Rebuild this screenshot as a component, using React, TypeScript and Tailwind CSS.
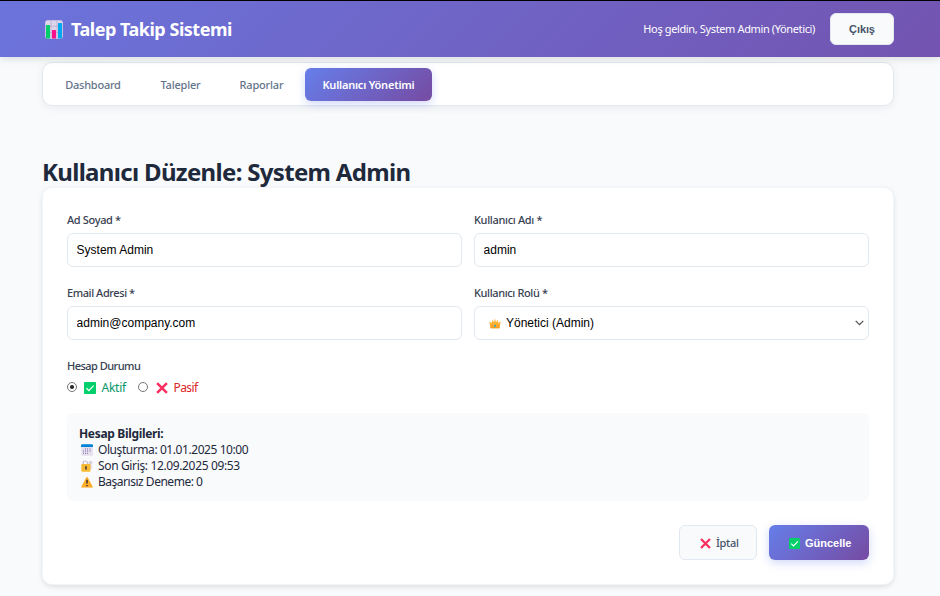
import React from 'react';

function ChartIcon() {
  return (
    <svg className="h-[19px] w-[18px] shrink-0" viewBox="0 0 18 19">
      <rect x="0.2" y="0.2" width="17.6" height="18.6" rx="2.4" fill="#dfd5ea" />
      <path d="M0.5 6.3H17.5M0.5 12.5H17.5M6.1 0.5V18M12 0.5V18" stroke="#b9a9d2" strokeWidth="0.8" />
      <rect x="1" y="5" width="4" height="13.6" rx="0.5" fill="#00cc6a" />
      <rect x="7" y="10" width="4" height="8.6" rx="0.5" fill="#f9108a" />
      <rect x="13" y="3" width="4" height="15.6" rx="0.5" fill="#00a8f0" />
    </svg>
  );
}

function CheckIcon({ className }: { className: string }) {
  return (
    <svg className={`shrink-0 ${className}`} viewBox="0 0 12 12">
      <rect width="12" height="12" rx="1" fill="#00cf6b" />
      <path d="M2.4 6.2 4.9 8.6 9.7 3.7" fill="none" stroke="#fff" strokeWidth="1.2" />
    </svg>
  );
}

function CrossIcon({ className }: { className: string }) {
  return (
    <svg className={`shrink-0 ${className}`} viewBox="0 0 12 12">
      <path d="M1.1 1.1 10.9 10.9M10.9 1.1 1.1 10.9" fill="none" stroke="#f92f60" strokeWidth="2.5" />
    </svg>
  );
}

function CrownIcon() {
  return (
    <svg className="h-[11px] w-[12px] shrink-0" viewBox="0 0 12 11">
      <path d="M0.4 3.2 2.8 5 3.7 1.6 5 4.4 6 0.6 7 4.4 8.3 1.6 9.2 5 11.6 3.2 10.6 10.2H1.4Z" fill="#ffb02e" />
      <path d="M1.5 8.9H10.5L10.3 10.3H1.7Z" fill="#f59a23" />
      <circle cx="6" cy="7.8" r="1.1" fill="#26a9b8" />
      <circle cx="3" cy="7.7" r="0.6" fill="#f3702d" />
      <circle cx="9" cy="7.7" r="0.6" fill="#f3702d" />
    </svg>
  );
}

function CalendarIcon() {
  return (
    <svg className="h-3 w-3 shrink-0" viewBox="0 0 12 12">
      <rect x="0.2" y="0.5" width="11.6" height="11.3" rx="1.2" fill="#e5dfee" />
      <path d="M0 3V1.4Q0 0.2 1.2 0.2H10.8Q12 0.2 12 1.4V3Z" fill="#0084d8" />
      <path
        d="M4 4.5h1v1h-1zM6 4.5h1v1h-1zM8.5 4.5h1v1h-1zM2 6.5h1v1h-1zM4 6.5h1v1h-1zM6 6.5h1v1h-1zM8.5 6.5h1v1h-1zM2 8.7h1v1h-1zM4 8.7h1v1h-1zM6 8.7h1v1h-1z"
        fill="#7d6ba8"
      />
    </svg>
  );
}

function LockIcon() {
  return (
    <svg className="h-3 w-3 shrink-0" viewBox="0 0 12 12">
      <path d="M2.2 5V3Q2.2 1 4.3 1T6.6 3V5" fill="none" stroke="#c7bdcd" strokeWidth="1.2" />
      <circle cx="9.5" cy="2.8" r="2" fill="#d9d2dc" />
      <path d="M9 4.5H10.6V9H9Z" fill="#d9d2dc" />
      <rect x="0.3" y="4" width="9.2" height="7.7" rx="1" fill="#f8b932" />
      <path d="M5 6.7V9" stroke="#493a42" strokeWidth="1.6" strokeLinecap="round" />
    </svg>
  );
}

function WarningIcon() {
  return (
    <svg className="h-3 w-3 shrink-0" viewBox="0 0 12 12">
      <path d="M6 1.1 11.4 11.1H0.6Z" fill="#ffad2b" stroke="#ffad2b" strokeWidth="1" strokeLinejoin="round" />
      <path d="M6 3.8V7.5M6 8.9V10.2" stroke="#2b2532" strokeWidth="1.4" />
    </svg>
  );
}

const arial = "font-['Liberation_Sans',Arial,sans-serif]";

function Field({ label, labelClass, children }: { label: string; labelClass: string; children: React.ReactNode }) {
  return (
    <label className="flex min-w-0 flex-1 flex-col gap-[5px]">
      <span className={`h-4 text-[11px] leading-4 font-medium whitespace-nowrap text-[#374151] ${labelClass}`}>{label}</span>
      {children}
    </label>
  );
}

function TextInput({ value }: { value: string }) {
  return (
    <input
      defaultValue={value}
      className={`h-[34px] w-full rounded-[6px] border border-[#e2e8f0] bg-white px-[8.6px] text-[12px] text-black ${arial}`}
    />
  );
}

export default function App() {
  return (
    <div className="h-[596px] overflow-hidden bg-[#f8fafc] font-['Noto_Sans','Open_Sans',sans-serif] text-[#1f2937]">
      <header className="relative h-[57px] border-t border-black bg-[linear-gradient(135deg,#6b74dc_0%,#7354b0_100%)] pr-[46px] pl-[45px] shadow-[0_2px_8px_rgba(0,0,0,0.12)]">
        <div className="flex h-full items-center">
          <ChartIcon />
          <h1 className="ml-[8px] text-[18px] leading-6 font-bold tracking-[-0.48px] whitespace-nowrap text-white">Talep Takip Sistemi</h1>
          <span className="ml-auto text-[11px] leading-4 tracking-[-0.37px] whitespace-nowrap text-white">Hoş geldin, System Admin (Yönetici)</span>
          <button className={`ml-[15px] h-8 w-16 rounded-[6px] border border-[#e2e8f0] bg-[#f8fafc] text-[11px] font-bold tracking-[-0.1px] text-[#475569] ${arial}`}>Çıkış</button>
        </div>
      </header>

      <div className="ml-[42px] w-[852px] pt-[5px]">
        <nav className="flex h-[44px] items-center gap-1 rounded-[10px] border border-[#e2e8f0] bg-white px-[5px] text-[11px] font-medium text-[#64748b] shadow-[0_2px_8px_rgba(0,0,0,0.06)]">
          <a className="w-[90px] pt-[2px] text-center tracking-[-0.25px]">Dashboard</a>
          <a className="ml-px w-[75px] pt-[2px] text-center tracking-[-0.2px]">Talepler</a>
          <a className="w-[79px] pt-[2px] text-center tracking-[-0.2px]">Raporlar</a>
          <a className="h-[33px] w-[127px] rounded-[6px] bg-[linear-gradient(135deg,#667eea_0%,#764ba2_100%)] text-center leading-[34px] font-semibold tracking-[-0.22px] text-white shadow-[0_3px_8px_rgba(102,126,234,0.3)]">
            Kullanıcı Yönetimi
          </a>
        </nav>

        <h2 className="mt-[50px] h-[31px] text-[24px] leading-[31px] font-bold tracking-[-0.68px] whitespace-nowrap text-[#1e293b]">
          Kullanıcı Düzenle: System Admin
        </h2>

        <main className="h-[398px] rounded-[10px] border border-[#f1f5f9] bg-white px-6 pt-6 shadow-[0_2px_5px_rgba(0,0,0,0.1)]">
          <div className="flex gap-3">
            <Field label="Ad Soyad *" labelClass="tracking-[-0.35px]">
              <TextInput value="System Admin" />
            </Field>
            <Field label="Kullanıcı Adı *" labelClass="tracking-[-0.33px]">
              <TextInput value="admin" />
            </Field>
          </div>
          <div className="mt-[18px] flex gap-3">
            <Field label="Email Adresi *" labelClass="tracking-[-0.42px]">
              <TextInput value="admin@company.com" />
            </Field>
            <Field label="Kullanıcı Rolü *" labelClass="tracking-[-0.38px]">
              <span className={`flex h-[34px] items-center rounded-[6px] border border-[#e2e8f0] bg-white pr-1 pl-[14px] text-[12px] text-black ${arial}`}>
                <CrownIcon />
                <span className="ml-[5px]">Yönetici (Admin)</span>
                <svg className="ml-auto h-[6px] w-[9px]" viewBox="0 0 9 6">
                  <path d="M0.7 0.9 4.5 4.6 8.3 0.9" fill="none" stroke="#555" strokeWidth="1.3" />
                </svg>
              </span>
            </Field>
          </div>

          <div className="mt-[18px] h-4 text-[11px] leading-4 font-medium tracking-[-0.53px] text-[#374151]">Hesap Durumu</div>
          <div className="mt-[6px] flex h-4 items-center text-[12px] leading-4">
            <span className="mb-[3px] -ml-[0.5px] flex h-[10px] w-[10px] items-center justify-center rounded-full border border-[#767676] bg-white">
              <span className="h-1 w-1 rounded-full bg-[#222]" />
            </span>
            <CheckIcon className="ml-[7.5px] h-3 w-3" />
            <span className="ml-[5.5px] w-[26px] tracking-[-0.25px] whitespace-nowrap text-[#059669]">Aktif</span>
            <span className="mb-[3px] ml-[10px] h-[10px] w-[10px] rounded-full border border-[#767676] bg-white" />
            <CrossIcon className="ml-2 h-3 w-3" />
            <span className="ml-[6px] tracking-[-0.6px] text-[#dc2626]">Pasif</span>
          </div>

          <section className="mt-[17px] h-[88px] rounded-[6px] bg-[#f8fafc] px-3 pt-[13px] text-[12px] leading-4 whitespace-nowrap text-[#1e293b]">
            <div className="font-bold tracking-[-0.33px]">Hesap Bilgileri:</div>
            <div className="flex items-center gap-[5px] pl-[2px]">
              <CalendarIcon />
              <span className="tracking-[-0.43px]">Oluşturma: 01.01.2025 10:00</span>
            </div>
            <div className="flex items-center gap-[5px] pl-[2px]">
              <LockIcon />
              <span className="tracking-[-0.36px]">Son Giriş: 12.09.2025 09:53</span>
            </div>
            <div className="flex items-center gap-[5px] pl-[2px]">
              <WarningIcon />
              <span className="tracking-[-0.48px]">Başarısız Deneme: 0</span>
            </div>
          </section>

          <div className="mt-6 flex justify-end gap-3">
            <a className="flex h-[35px] w-[78px] items-center rounded-[6px] border border-[#e2e8f0] bg-[#f8fafc] pl-5 text-[11px] font-medium text-[#475569]">
              <CrossIcon className="mt-px h-[11px] w-[11px]" />
              <span className="ml-[5px] pt-px tracking-[-0.3px]">İptal</span>
            </a>
            <button className={`flex h-[35px] w-[100px] items-center rounded-[6px] bg-[linear-gradient(135deg,#667eea_0%,#764ba2_100%)] pl-5 text-[11px] font-bold text-white shadow-[0_3px_10px_rgba(102,126,234,0.3)] ${arial}`}>
              <CheckIcon className="mt-px h-[11px] w-[11px]" />
              <span className="ml-[5px] pt-px">Güncelle</span>
            </button>
          </div>
        </main>
      </div>
    </div>
  );
}
